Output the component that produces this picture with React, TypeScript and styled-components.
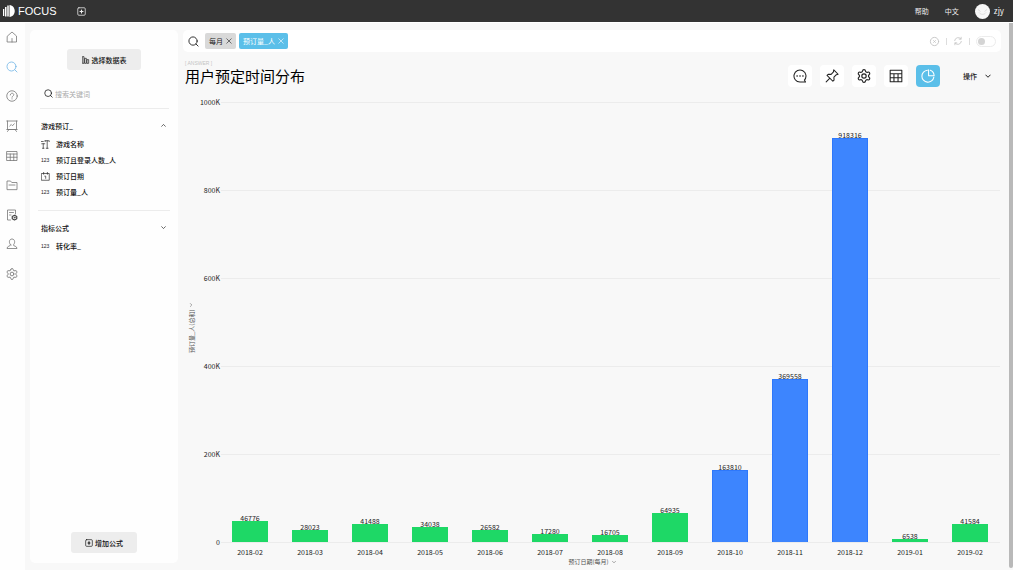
import React from 'react';
import styled, { createGlobalStyle, css } from 'styled-components';

const GlobalStyle = createGlobalStyle`
  *, *::before, *::after { box-sizing: border-box; }
  body {
    margin: 0;
    background: #f8f8f8;
    color: #222;
    font: 7px/8px "Noto Sans CJK SC", sans-serif;
  }
  button, input { font: inherit; color: inherit; }
  button { border: 0; padding: 0; background: none; cursor: pointer; }
  a { color: inherit; text-decoration: none; }
  h1, h2, ul { margin: 0; padding: 0; font-size: inherit; font-weight: inherit; }
  ul { list-style: none; }
  svg { display: block; flex: none; }
`;

const Page = styled.div`
  display: flex;
  flex-direction: column;
  height: 100vh;
  min-height: 420px;
`;

const Header = styled.header`
  display: flex;
  align-items: center;
  flex: none;
  height: 22px;
  padding: 0 9px 0 3px;
  background: #333;
  color: #eee;
`;

const Brand = styled.a`
  display: flex;
  align-items: center;
  gap: 3px;
  color: #fff;
  font: 11px/14px "Liberation Sans", sans-serif;
`;

const NewTab = styled.button`
  margin-left: 20px;
`;

const HeaderLinks = styled.nav`
  display: flex;
  align-items: center;
  gap: 16px;
  margin-left: auto;
`;

const Account = styled.button`
  display: flex;
  align-items: center;
  gap: 4px;
  font-size: 8px;
`;

const Body = styled.div`
  display: flex;
  flex: 1;
  min-height: 0;
  border-top: 1px solid #fff;
`;

const Rail = styled.nav`
  flex: none;
  width: 25px;
  padding: 8px 1px 0 0;
  background: #fefefe;
`;

const RailList = styled.ul`
  display: flex;
  flex-direction: column;
  align-items: center;
  justify-content: space-between;
  height: 249px;
`;

const RailLink = styled.a<{ $active?: boolean }>`
  display: block;
  color: ${(p) => (p.$active ? '#6fb4e6' : '#777')};
`;

const Panel = styled.aside`
  display: flex;
  flex-direction: column;
  flex: none;
  width: 148px;
  margin: 7px 5px;
  padding: 19px 8px 10px;
  border-radius: 5px;
  background: #fefefe;
  color: #111;
`;

const PanelButton = styled.button<{ $narrow?: boolean }>`
  display: flex;
  align-items: center;
  justify-content: center;
  align-self: center;
  gap: 2px;
  width: ${(p) => (p.$narrow ? 66 : 74)}px;
  height: 21px;
  border-radius: 3px;
  background: #ededed;
  font-weight: 500;
  ${(p) => p.$narrow && css`margin-top: auto;`}
`;

const Keyword = styled.label`
  display: flex;
  align-items: center;
  gap: 2px;
  height: 30px;
  margin: 9px 1px 0 2px;
  padding-left: 4px;
  border-bottom: 1px solid #ececec;
`;

const KeywordInput = styled.input`
  flex: 1;
  min-width: 0;
  padding: 0;
  border: 0;
  outline: 0;
  background: none;
  &::placeholder { color: #aaa; opacity: 1; }
`;

const Group = styled.section`
  padding: 7px 0 10px;
  & + & { border-top: 1px solid #ececec; }
`;

const GroupHead = styled.button`
  display: flex;
  align-items: center;
  justify-content: space-between;
  width: 100%;
  height: 19px;
  padding: 0 4px 0 3px;
  font-weight: 500;
`;

const FieldList = styled.ul`
  padding-top: 1px;
`;

const Field = styled.li`
  display: flex;
  align-items: center;
  height: 16px;
  padding-left: 3px;
  font-weight: 500;
`;

const FieldKind = styled.span`
  flex: none;
  width: 15px;
  color: #222;
  font: 5px/8px "Liberation Sans", sans-serif;
`;

const Main = styled.main`
  display: flex;
  flex-direction: column;
  flex: 1;
  min-width: 0;
  padding: 7px 8px 4px 0;
`;

const SearchBar = styled.div`
  display: flex;
  align-items: center;
  flex: none;
  height: 22px;
  padding: 0 5px;
  border-radius: 5px;
  background: #fff;
`;

const Tag = styled.span<{ $blue?: boolean }>`
  display: flex;
  align-items: center;
  gap: 3px;
  height: 16px;
  padding: 0 4px;
  border-radius: 2px;
  background: ${(p) => (p.$blue ? '#5bbfe9' : '#d9d9d9')};
  color: ${(p) => (p.$blue ? '#fff' : '#222')};
`;

const Tags = styled.div`
  display: flex;
  gap: 3px;
  margin-left: 6px;
`;

const SearchTools = styled.div`
  display: flex;
  align-items: center;
  gap: 6px;
  margin-left: auto;
  color: #c4c4c4;
`;

const Separator = styled.span`
  width: 1px;
  height: 7px;
  background: #ddd;
`;

const Switch = styled.input`
  appearance: none;
  display: flex;
  align-items: center;
  width: 20px;
  height: 11px;
  margin: 0;
  padding: 0 1px;
  border: 1px solid #ececec;
  border-radius: 6px;
  background: #fff;
  &::before {
    content: '';
    width: 7px;
    height: 7px;
    border-radius: 50%;
    background: #d4d4d4;
  }
`;

const TitleRow = styled.div`
  display: flex;
  align-items: flex-end;
  justify-content: space-between;
  flex: none;
  padding: 8px 10px 0 2px;
`;

const Kicker = styled.p`
  margin: 0;
  color: #c4c4c4;
  font: 5px/6px "Liberation Sans", sans-serif;
`;

const Title = styled.h1`
  padding-top: 1px;
  padding-bottom: 2px;
  color: #000;
  font-size: 15px;
  line-height: 18px;
`;

const Toolbar = styled.div`
  display: flex;
  gap: 8px;
`;

const Tool = styled.button<{ $active?: boolean }>`
  display: grid;
  place-items: center;
  width: 24px;
  height: 22px;
  border-radius: 4px;
  background: ${(p) => (p.$active ? '#5bbfe9' : '#fff')};
  color: ${(p) => (p.$active ? '#fff' : '#222')};
`;

const Actions = styled.button`
  display: flex;
  align-items: center;
  gap: 8px;
  margin-left: 15px;
  font-weight: 500;
`;

const Chart = styled.section`
  display: grid;
  grid-template-columns: 17px 20px 1fr;
  grid-template-rows: 1fr auto auto;
  flex: 1;
  min-height: 0;
  padding: 15px 1px 0 0;
`;

const AxisTitle = styled.button<{ $vertical?: boolean }>`
  display: flex;
  align-items: center;
  justify-content: center;
  gap: 3px;
  color: #555;
  font-size: 6px;
  line-height: 8px;
  ${(p) =>
    p.$vertical
      ? css`
          writing-mode: vertical-rl;
          text-orientation: sideways;
          transform: rotate(180deg);
          padding-bottom: 12px;
        `
      : css`
          grid-column: 2 / 4;
          margin-top: 2px;
          padding-right: 16px;
        `}
`;

const Ticks = styled.div`
  display: flex;
  flex-direction: column;
  justify-content: space-between;
  text-align: right;
`;

const Tick = styled.span`
  display: flex;
  align-items: center;
  justify-content: flex-end;
  height: 0;
`;

const Plot = styled.div`
  display: grid;
  grid-template: minmax(0, 1fr) / minmax(0, 1fr);
  min-height: 0;
`;

const Lines = styled.div`
  grid-area: 1 / 1;
  display: flex;
  flex-direction: column;
  justify-content: space-between;
  margin-bottom: -1px;
  padding-left: 1px;
`;

const Line = styled.div`
  height: 1px;
  background: #ececec;
`;

const Bars = styled.div`
  grid-area: 1 / 1;
  display: flex;
  min-height: 0;
`;

const BarSlot = styled.div`
  display: flex;
  flex-direction: column;
  align-items: center;
  justify-content: flex-end;
  flex: 1;
  height: 100%;
`;

const BarValue = styled.span`
  margin-bottom: -1px;
  line-height: 7px;
`;

const Bar = styled.div<{ $high: boolean }>`
  flex: none;
  width: 60%;
  background: ${(p) => (p.$high ? '#3d85fe' : '#1ed866')};
  border: 1px solid ${(p) => (p.$high ? '#2e78fb' : '#1ed866')};
  border-bottom: 0;
`;

const Months = styled.div`
  grid-column: 3;
  display: flex;
  padding-top: 6px;
`;

const Month = styled.span`
  flex: 1;
  text-align: center;
`;

const ScrollTrack = styled.div`
  flex: none;
  width: 4px;
  margin-bottom: 2px;
  border-radius: 0 0 2px 2px;
  background: #b9b9b9;
`;

type IconProps = { size?: number; stroke?: number; children: React.ReactNode };

const Icon = ({ size = 12, stroke = 1.6, children }: IconProps) => (
  <svg
    width={size}
    height={size}
    viewBox="0 0 24 24"
    fill="none"
    stroke="currentColor"
    strokeWidth={stroke}
    strokeLinecap="round"
    strokeLinejoin="round"
    aria-hidden="true"
  >
    {children}
  </svg>
);

const searchShape = (
  <>
    <circle cx="11" cy="11" r="9" />
    <path d="M17.5 17.5 22 22" />
  </>
);
const gearShape = (
  <g transform="translate(-1.2 -1.2) scale(1.1)">
    <path d="M9.671 4.136a2.34 2.34 0 0 1 4.659 0 2.34 2.34 0 0 0 3.319 1.915 2.34 2.34 0 0 1 2.33 4.033 2.34 2.34 0 0 0 0 3.831 2.34 2.34 0 0 1-2.33 4.033 2.34 2.34 0 0 0-3.319 1.915 2.34 2.34 0 0 1-4.659 0 2.34 2.34 0 0 0-3.32-1.915 2.34 2.34 0 0 1-2.33-4.033 2.34 2.34 0 0 0 0-3.831A2.34 2.34 0 0 1 6.35 6.051a2.34 2.34 0 0 0 3.319-1.915" />
    <circle cx="12" cy="12" r="3.4" />
  </g>
);
const downShape = <path d="m3 8 9 9 9-9" />;
const upShape = <path d="m3 16 9-9 9 9" />;
const closeShape = <path d="m3 3 18 18M21 3 3 21" />;

const railItems = [
  { label: '首页', shape: <path d="M3 10 12 2l9 8v12H3zM12 22v-7" /> },
  { label: '搜索', shape: searchShape, active: true },
  {
    label: '问答',
    shape: (
      <>
        <circle cx="12" cy="12" r="10.500" />
        <path d="M8.500 10c0-5 7-4.500 7-.5 0 2.500-3.500 2.500-3.500 5M12 17.500v.5" />
      </>
    ),
  },
  { label: '看板', shape: <path d="M1.500 2h21M3 2v17h18V2M1.500 19h21M6 19l-3 4M18 19l3 4M7.500 12l3-3 2.500 2.500 3.500-4" /> },
  { label: '数据表', shape: <path d="M2 3h20v18H2zM2 8h20M2 14.500h20M8.500 8v13M15.500 8v13" /> },
  { label: '文件夹', shape: <path d="M2 20.500V4h7l2.500 3H22v13.500zM6 12h12" /> },
  {
    label: '日志',
    shape: (
      <>
        <path d="M9 22H3V2h16v8M7 7h8M7 12h3" />
        <g stroke="#444">
          <path strokeWidth="2.400" d="m17 12.500 4.500 2.500v4.500L17 22l-4.500-2.500V15z" />
          <circle cx="17" cy="17.200" r="1" />
        </g>
      </>
    ),
  },
  { label: '用户', shape: <path d="M9.500 14C5 10 6 2 12 2s7 8 2.500 12c0 2.500 7.500 1.500 7.500 7H2c0-5.500 7.500-4.500 7.500-7z" /> },
  { label: '设置', shape: gearShape },
];

const NumberKind = () => <FieldKind>123</FieldKind>;
const TextKind = () => (
  <FieldKind>
    <Icon size={9} stroke={1.8}>
      <path d="M2 10h8M6 10v12M4 22h4M1 4h5M11 2h11v2M11 2v2M16.500 2v20M14 22h5" />
    </Icon>
  </FieldKind>
);
const DateKind = () => (
  <FieldKind>
    <Icon size={9} stroke={1.8}>
      <path d="M2 4h20v18H2zM7 1v5M17 1v5M10 11h2.500v6" />
    </Icon>
  </FieldKind>
);

const groups = [
  {
    name: '游戏预订_',
    open: true,
    fields: [
      { name: '游戏名称', kind: <TextKind /> },
      { name: '预订且登录人数_人', kind: <NumberKind /> },
      { name: '预订日期', kind: <DateKind /> },
      { name: '预订量_人', kind: <NumberKind /> },
    ],
  },
  { name: '指标公式', open: false, fields: [{ name: '转化率_', kind: <NumberKind /> }] },
];

const tools = [
  {
    label: '评论',
    shape: (
      <>
        <path d="M19.500 19A10.300 10.300 0 1 0 12 22.300h9.500z" />
        <path strokeWidth="2.800" d="M7 12h.1M12 12h.1M17 12h.1" />
      </>
    ),
  },
  { label: '固定', shape: <path d="M15 1.500 22.500 9l-3 .8-4.200 4.200.2 5-2 2L3.500 11l2-2 5 .2L14.500 5zM8 16l-6 6" /> },
  { label: '设置', shape: gearShape },
  { label: '表格', shape: <path d="M2 2h20v20H2zM2 8h20M2 15h20M8.500 8v14M15.500 8v14" /> },
  { label: '图表', shape: <path d="M11 2A10.300 10.300 0 1 0 22 14M13 1.500V11.500h9.500M16 2.200a10.300 10.300 0 0 1 6.500 9.300" />, active: true },
];

const MAX = 1000000;
const HIGH = 100000;
const ticks = ['1000K', '800K', '600K', '400K', '200K', '0'];
const data: [string, number][] = [
  ['2018-02', 46776],
  ['2018-03', 28023],
  ['2018-04', 41488],
  ['2018-05', 34038],
  ['2018-06', 26582],
  ['2018-07', 17280],
  ['2018-08', 16705],
  ['2018-09', 64935],
  ['2018-10', 163810],
  ['2018-11', 369558],
  ['2018-12', 918316],
  ['2019-01', 6538],
  ['2019-02', 41584],
];

export default function App() {
  return (
    <Page>
      <GlobalStyle />
      <Header>
        <Brand href="#">
          <svg width="12" height="12" viewBox="0 0 24 24" fill="#fff" aria-hidden="true">
            <path d="M0 8h2.500v14H0zM4 4h3v19H4zM8.500 1h3v22h-3zM13 0c14 1 14 23 0 24z" />
          </svg>
          FOCUS
        </Brand>
        <NewTab aria-label="新建">
          <Icon size={9} stroke={2}>
            <rect x="2" y="2" width="20" height="20" rx="3" />
            <path strokeWidth="3" d="M12 8v8M8 12h8" />
          </Icon>
        </NewTab>
        <HeaderLinks>
          <a href="#help">帮助</a>
          <a href="#lang">中文</a>
          <Account>
            <svg width="15" height="15" viewBox="0 0 30 30" aria-hidden="true">
              <circle cx="15" cy="15" r="15" fill="#f7f7f7" />
              <path d="M6 11l5 4M24 11l-5 4M8 17c4 5 10 5 14 0" fill="none" stroke="#ddd" strokeWidth="2" />
            </svg>
            zjy
          </Account>
        </HeaderLinks>
      </Header>
      <Body>
        <Rail>
          <RailList>
            {railItems.map((item) => (
              <li key={item.label}>
                <RailLink href="#" aria-label={item.label} $active={item.active}>
                  <Icon>{item.shape}</Icon>
                </RailLink>
              </li>
            ))}
          </RailList>
        </Rail>
        <Panel>
          <PanelButton>
            <Icon size={8} stroke={2}>
              <path d="M2 2h4v20H2zM9 7h4v15H9zM16 11h4v11h-4z" />
            </Icon>
            选择数据表
          </PanelButton>
          <Keyword>
            <Icon size={9} stroke={2}>{searchShape}</Icon>
            <KeywordInput placeholder="搜索关键词" aria-label="搜索关键词" />
          </Keyword>
          {groups.map((group) => (
            <Group key={group.name}>
              <GroupHead>
                {group.name}
                <Icon size={5} stroke={3}>{group.open ? upShape : downShape}</Icon>
              </GroupHead>
              <FieldList>
                {group.fields.map((field) => (
                  <Field key={field.name}>
                    {field.kind}
                    {field.name}
                  </Field>
                ))}
              </FieldList>
            </Group>
          ))}
          <PanelButton $narrow>
            <Icon size={8} stroke={2}>
              <rect x="2" y="2" width="20" height="20" rx="3" />
              <path strokeWidth="3" d="M12 8v8M9 12h6" />
            </Icon>
            增加公式
          </PanelButton>
        </Panel>
        <Main>
          <SearchBar>
            <Icon size={11} stroke={2}>{searchShape}</Icon>
            <Tags>
              <Tag>
                每月
                <button aria-label="移除每月"><Icon size={6} stroke={2.4}>{closeShape}</Icon></button>
              </Tag>
              <Tag $blue>
                预订量_人
                <button aria-label="移除预订量_人"><Icon size={6} stroke={2.4}>{closeShape}</Icon></button>
              </Tag>
            </Tags>
            <SearchTools>
              <button aria-label="清除">
                <Icon size={11} stroke={2}>
                  <circle cx="12" cy="12" r="9" />
                  <path d="m10 10 4 4M14 10l-4 4" />
                </Icon>
              </button>
              <Separator />
              <button aria-label="刷新">
                <Icon size={10} stroke={2}>
                  <path d="M4 11A8.500 8.500 0 0 1 19 7M19.500 3v4.500H15M20 13A8.500 8.500 0 0 1 5 17M4.500 21v-4.500H9" />
                </Icon>
              </button>
              <Separator />
              <Switch type="checkbox" role="switch" aria-label="自动查询" />
            </SearchTools>
          </SearchBar>
          <TitleRow>
            <div>
              <Kicker>[ ANSWER ]</Kicker>
              <Title>用户预定时间分布</Title>
            </div>
            <Toolbar>
              {tools.map((tool) => (
                <Tool key={tool.label} aria-label={tool.label} $active={tool.active}>
                  <Icon size={14} stroke={1.8}>{tool.shape}</Icon>
                </Tool>
              ))}
              <Actions>
                操作
                <Icon size={6} stroke={4}>{downShape}</Icon>
              </Actions>
            </Toolbar>
          </TitleRow>
          <Chart aria-label="用户预定时间分布">
            <AxisTitle $vertical>
              预订量_人(总和)
              <Icon size={4} stroke={3}><path d="m16 3-9 9 9 9" /></Icon>
            </AxisTitle>
            <Ticks>
              {ticks.map((tick) => <Tick key={tick}>{tick}</Tick>)}
            </Ticks>
            <Plot>
              <Lines>
                {ticks.map((tick) => <Line key={tick} />)}
              </Lines>
              <Bars>
                {data.map(([month, value]) => (
                  <BarSlot key={month}>
                    <BarValue>{value}</BarValue>
                    <Bar $high={value > HIGH} style={{ height: `${(value / MAX) * 100}%` }} />
                  </BarSlot>
                ))}
              </Bars>
            </Plot>
            <Months>
              {data.map(([month]) => <Month key={month}>{month}</Month>)}
            </Months>
            <AxisTitle>
              预订日期(每月)
              <Icon size={4} stroke={3}>{downShape}</Icon>
            </AxisTitle>
          </Chart>
        </Main>
        <ScrollTrack />
      </Body>
    </Page>
  );
}
